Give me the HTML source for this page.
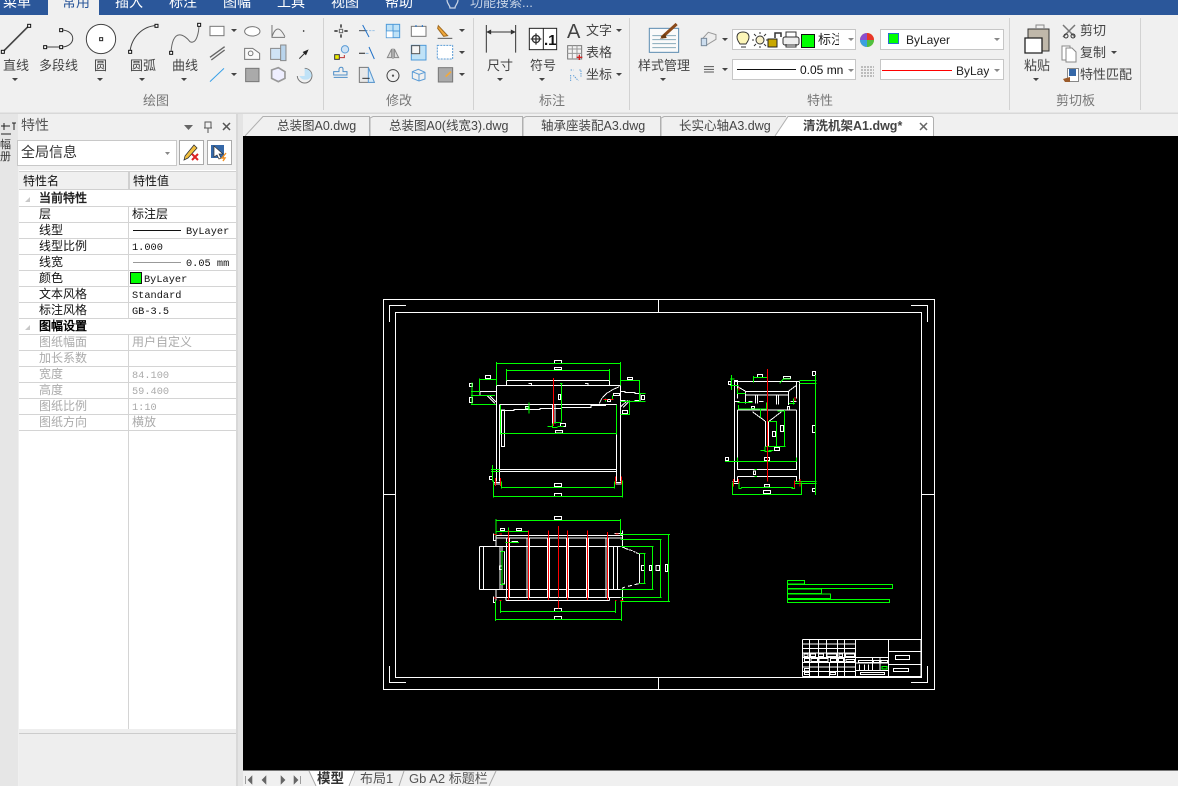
<!DOCTYPE html>
<html><head><meta charset="utf-8">
<style>
html,body{margin:0;padding:0;background:#f0f0f0;width:1178px;height:786px;overflow:hidden}
svg{display:block;position:absolute;left:0;top:0}
text{font-family:"Liberation Sans","Noto Sans CJK SC",sans-serif;fill:#444;font-size:13px}
.t{font-size:12px;fill:#111;font-family:"Liberation Mono","WenQuanYi Zen Hei",monospace}
.g{font-size:12px;fill:#aaa;font-family:"Liberation Mono","WenQuanYi Zen Hei",monospace}
.s{font-size:10.300px;fill:#111;font-family:"Liberation Mono","WenQuanYi Zen Hei",monospace}
.m{fill:#fff;font-size:14px}
.c{fill:#777;font-size:13px}
.W path,.W rect{fill:none;stroke:#fff;stroke-width:3}
.G path{fill:none;stroke:#0f0;stroke-width:3}
.R path{fill:none;stroke:#f00;stroke-width:3}
.W,.G,.R,.F{shape-rendering:crispEdges}
</style></head><body>
<svg width="1178" height="786" viewBox="0 0 1178 786" xmlns="http://www.w3.org/2000/svg">
<rect width="1178" height="786" fill="#f0f0f0"/>
<!-- menu bar -->
<rect width="1178" height="15" fill="#2b579a"/>
<rect x="48" width="51" height="16" fill="#f0f0f0"/>
<g class="m">
<text class="m" x="3" y="7">菜单</text>
<text x="62" y="7" style="fill:#2b579a;font-size:14px">常用</text>
<text class="m" x="115" y="7">插入</text>
<text class="m" x="169" y="7">标注</text>
<text class="m" x="223" y="7">图幅</text>
<text class="m" x="277" y="7">工具</text>
<text class="m" x="331" y="7">视图</text>
<text class="m" x="385" y="7">帮助</text>
<text x="470" y="7" style="fill:#c8d4e6;font-size:13px">功能搜索...</text>
</g>
<path d="M447 0c0 4 3 5 3 8h5c0-3 3-4 3-8" fill="none" stroke="#c8d4e6" stroke-width="1.2"/>
<!-- ribbon separators -->
<path d="M323.500 18V110M473.500 18V110M629.500 18V110M1009.500 18V110M1140.500 18V110" stroke="#d2d2d2"/>
<path d="M0 113.500H1178" stroke="#d8d8d8" stroke-width="2"/>
<!-- draw icons, zoom coordinates -->
<g transform="scale(.3333)" fill="none" stroke="#444" stroke-width="3">
<path d="M9 155L87 77" stroke-width="5"/>
<rect x="4" y="151" width="9" height="9" fill="#fff" stroke="#111"/><rect x="83" y="73" width="9" height="9" fill="#fff" stroke="#111"/>
<path d="M135 141H183M183 90C230 90 230 141 183 141"/>
<rect x="131" y="137" width="9" height="9" fill="#fff" stroke="#111"/><rect x="179" y="137" width="9" height="9" fill="#fff" stroke="#111"/><rect x="179" y="86" width="9" height="9" fill="#fff" stroke="#111"/>
<circle cx="303" cy="117" r="44" stroke="#444" fill="#fff"/><rect x="299" y="113" width="9" height="9" stroke="#222"/>
<path d="M390 155C395 110 430 78 469 77"/>
<rect x="386" y="151" width="9" height="9" fill="#fff" stroke="#111"/><rect x="465" y="73" width="9" height="9" fill="#fff" stroke="#111"/>
<path d="M513 158C518 80 555 105 570 125C590 135 597 95 597 74" stroke="#666"/>
<rect x="509" y="154" width="9" height="9" fill="#fff" stroke="#111"/><rect x="593" y="70" width="9" height="9" fill="#fff" stroke="#111"/>
<rect x="630" y="79" width="42" height="28" fill="#fff" stroke="#777"/>
<path d="M630 172L674 140M634 180L674 150" stroke="#666" stroke-width="4"/>
<path d="M630 245L672 205" stroke="#38a0e8"/>
<ellipse cx="757" cy="94" rx="23" ry="14" fill="#fff" stroke="#777"/>
<path d="M734 145H758L779 160V178H734Z" stroke="#777" fill="#fafafa"/><circle cx="752" cy="160" r="7" stroke="#777"/>
<rect x="737" y="205" width="40" height="40" fill="#aaa" stroke="#777"/>
<path d="M816 75V112H855M816 110C830 70 845 90 855 110" stroke="#777"/>
<path d="M812 145H855V178H812Z" fill="#cfe3f5" stroke="#888"/><path d="M842 135H858V182H842Z" fill="#b9d4ec" stroke="#888"/>
<path d="M815 210L835 203L855 215L855 235L835 245L815 235Z" fill="#eef" stroke="#999" stroke-width="5"/>
<circle cx="911" cy="93" r="2.500" fill="#333" stroke="none"/>
<path d="M898 176L922 152" stroke="#333"/><path d="M926 148L908 156L918 166Z" fill="#222" stroke="none"/>
<path d="M914 205A22 22 0 1 1 892 228" stroke="#777"/><path d="M914 228V206A22 22 0 0 1 935 228Z" fill="#bfe2f7" stroke="none"/><path d="M898 228H935A21 21 0 0 1 898 228Z" fill="#bfe2f7" stroke="none"/>
</g>
<g fill="#444">
<path d="M231 29h6l-3 3zM231 73h6l-3 3z"/>
<path d="M12 78h6l-3 3zM97 78h6l-3 3zM139 78h6l-3 3zM181 78h6l-3 3zM497 78h6l-3 3zM539 78h6l-3 3zM660 78h6l-3 3zM1033 78h6l-3 3z"/>
<path d="M459 29h6l-3 3zM459 51h6l-3 3zM459 73h6l-3 3zM616 29h6l-3 3zM616 73h6l-3 3zM722 38h6l-3 3zM722 68h6l-3 3zM1111 51h6l-3 3z"/>
</g>
<g font-size="13">
<text x="3" y="70">直线</text><text x="39" y="70">多段线</text><text x="94" y="70">圆</text><text x="130" y="70">圆弧</text><text x="172" y="70">曲线</text>
<text x="143" y="105" class="c">绘图</text><text x="386" y="105" class="c">修改</text><text x="539" y="105" class="c">标注</text><text x="807" y="105" class="c">特性</text><text x="1056" y="105" class="c">剪切板</text>
<text x="487" y="70">尺寸</text><text x="530" y="70">符号</text><text x="586" y="35">文字</text><text x="586" y="57">表格</text><text x="586" y="79">坐标</text>
<text x="638" y="70">样式管理</text>
<text x="1024" y="70">粘贴</text><text x="1080" y="35">剪切</text><text x="1080" y="57">复制</text><text x="1080" y="79">特性匹配</text>
</g>
<text x="567" y="38" style="font-size:20px;fill:#444">A</text>
<!-- modify icons -->
<g transform="translate(325 15) scale(.3333)" fill="none" stroke="#555" stroke-width="3">
<rect x="43" y="43" width="10" height="10" stroke="#666"/><path d="M48 28V38M48 58V68M28 48H38M58 48H68" stroke="#444" stroke-width="5"/>
<path d="M102 47H150" stroke="#9cc3e6" stroke-dasharray="7 3"/><path d="M102 47H125" stroke="#555"/><path d="M113 30L132 66" stroke="#2272c8"/>
<rect x="184" y="28" width="40" height="40" fill="#bfe2f7" stroke="#4f9ad8"/><path d="M204 28V68M184 48H224" stroke="#4f9ad8"/><rect x="185" y="49" width="18" height="18" fill="#fff" stroke="none"/>
<rect x="259" y="34" width="44" height="30" fill="#fff" stroke="#777"/><path d="M273 30V36M292 30V36" stroke="#2272c8"/>
<path d="M340 32L368 62L356 64L338 40Z" fill="#f2a93b" stroke="#a06a20"/><path d="M338 70H382" stroke="#555"/>
<circle cx="60" cy="103" r="11" fill="#cfe3f5" stroke="#5a9bd5"/><rect x="29" y="119" width="14" height="14" fill="#ee0" stroke="#333"/><path d="M43 128H58V120" stroke="#b33"/>
<path d="M102 115H120" stroke="#555" stroke-width="4"/><path d="M122 115H130" stroke="#5a9bd5" stroke-dasharray="3 2"/><path d="M132 96L148 132" stroke="#2272c8"/>
<path d="M204 100V132M200 102L187 128H200ZM208 102L221 128H208Z" fill="#ddd" stroke="#888"/>
<rect x="259" y="91" width="44" height="44" fill="#bfe2f7" stroke="#4f9ad8"/><rect x="260" y="92" width="24" height="24" fill="#f4f4f4" stroke="#555"/>
<rect x="337" y="91" width="46" height="41" fill="#fff" stroke="#5a9bd5" stroke-dasharray="6 3"/>
<path d="M26 170H42V162C44 155 54 155 54 162V170H66V180H26ZM26 187H68" stroke="#4f8fc8"/>
<path d="M103 157H130L148 202H103Z" fill="#e8e8e8" stroke="#777"/><path d="M130 157L148 202H130Z" fill="#d5e9f8" stroke="#5a9bd5"/><path d="M112 190H134" stroke="#333"/>
<circle cx="204" cy="182" r="18" stroke="#444"/><circle cx="204" cy="182" r="2" fill="#444"/>
<path d="M262 170L280 163L300 172V192L282 198L262 190Z M282 178V198M262 170L282 178L300 172" stroke="#5a9bd5"/>
<rect x="340" y="158" width="43" height="43" fill="#aaa" stroke="#777"/><path d="M362 185L378 170" stroke="#f2a93b" stroke-width="5"/>
</g>
<!-- dim icons -->
<g transform="translate(400 0) scale(.3333)" fill="none" stroke="#333" stroke-width="3">
<path d="M259 75V158M347 75V158" stroke="#333"/><path d="M262 96H344" stroke-width="3"/><path d="M262 96L272 91V101ZM344 96L334 91V101Z" fill="#333"/>
<rect x="388" y="85" width="82" height="64" fill="#fff" stroke="#222"/><path d="M430 85V149" stroke="#222"/><circle cx="408" cy="117" r="11" stroke-width="4"/><path d="M392 117H424M408 100V134" stroke-width="4"/>
<rect x="503" y="137" width="42" height="40" fill="#f4f4f4" stroke="#777"/><path d="M503 147H545M517 137V177M531 137V177M503 160H545" stroke="#999"/><path d="M530 172H547M538 164V180" stroke="#c22" stroke-width="4"/>
<path d="M512 210H520M538 210H544M512 225V245M543 212V232M520 226L535 242" stroke="#5a9bd5" stroke-dasharray="4 3"/>
<rect x="748" y="85" width="88" height="72" fill="#fafafa" stroke="#5a8ab0"/><path d="M757 107H828M757 119H828M757 131H828M757 143H828" stroke="#8ab"/>
<path d="M785 113L830 72" stroke="#8a4a1a" stroke-width="9"/><path d="M780 116L795 100L800 114Z" fill="#6a3a10" stroke="none"/>
<path d="M904 120L925 97L948 104L948 118L920 135Z" fill="#eee" stroke="#999"/><rect x="904" y="115" width="16" height="22" fill="#cde" stroke="#789"/>
<path d="M912 200H942M912 208H942M912 216H942" stroke="#555"/>
</g>
<text x="544" y="45" style="font-size:15px;font-weight:bold;fill:#111">.1</text>
<!-- props combos -->
<rect x="732.500" y="29.500" width="123" height="20" fill="#fff" stroke="#c6c6c6"/>
<rect x="732.500" y="59.500" width="123" height="20" fill="#fff" stroke="#c6c6c6"/>
<rect x="880.500" y="29.500" width="123" height="20" fill="#fff" stroke="#c6c6c6"/>
<rect x="880.500" y="59.500" width="123" height="20" fill="#fff" stroke="#c6c6c6"/>
<path d="M848 38h6l-3 3zM848 69h6l-3 3zM994 38h6l-3 3zM994 69h6l-3 3z" fill="#888"/>
<g fill="none" stroke="#333">
<path d="M741 47h5M740 44C734 36 738 32 743 32C748 32 752 36 746 44Z" fill="#fdf6b8"/>
<circle cx="760" cy="40" r="4" fill="#f8f0c8"/><path d="M760 32v2M760 46v2M752 40h2M766 40h2M754 34l2 2M764 44l2 2M766 34l-2 2M756 44l-2 2"/>
<rect x="768" y="39" width="9" height="8" fill="#c9a800" stroke="#222"/><path d="M775 38V33H781V37" stroke-width="1.500"/>
<rect x="783" y="37" width="16" height="8" rx="2" fill="#eee"/><path d="M786 37V32H796V37M786 44V47H796V44"/>
<rect x="801.500" y="34.500" width="13" height="13" fill="#0f0" stroke="#111"/>
<path d="M737 69.500H796" stroke="#111" stroke-width="1"/>
<rect x="888.500" y="33.500" width="10" height="10" fill="#0f0" stroke="#2a6fd0"/>
<path d="M882 70.500H952" stroke="#f00"/>
<path d="M861 67h13M861 70h13M861 73h13M861 76h13" stroke="#888" stroke-dasharray="2 1"/>
</g>
<clipPath id="cp1"><rect x="732" y="30" width="107" height="20"/></clipPath>
<text x="818" y="44" clip-path="url(#cp1)" style="fill:#222">标注</text>
<text x="800" y="74" style="fill:#111;font-size:12px">0.05 mn</text>
<text x="906" y="44" style="fill:#222;font-size:12px">ByLayer</text>
<clipPath id="cp2"><rect x="950" y="60" width="39" height="20"/></clipPath>
<text x="956" y="75" clip-path="url(#cp2)" style="fill:#222;font-size:12px">ByLayer</text>
<circle cx="867" cy="40" r="7" fill="#f8c020"/><path d="M867 40V33A7 7 0 0 1 874 40Z" fill="#e8352a"/><path d="M867 40H860A7 7 0 0 1 867 33Z" fill="#8a4fd0"/><path d="M867 40V47A7 7 0 0 1 860 40Z" fill="#3aa0e0"/><path d="M867 40H874A7 7 0 0 1 867 47Z" fill="#50c040"/>
<!-- clipboard icons -->
<g fill="none" stroke="#333">
<path d="M1028 29H1049V51H1042V39H1028Z" fill="#c0b8aa"/><path d="M1036 29V25H1044V29" stroke="#888"/>
<path d="M1025 38H1038L1042 38V53H1025Z" fill="#fff" stroke="#222" stroke-width="1.300"/>
<path d="M1063 25L1075 37M1075 25L1063 37" stroke="#777" stroke-width="1.500"/><circle cx="1066" cy="36" r="2"/><circle cx="1073" cy="36" r="2"/>
<path d="M1062 46H1070V60H1062Z" stroke="#888" fill="#fff"/><path d="M1066 48H1072L1076 52V62H1066Z" stroke="#888" fill="#fff"/>
<rect x="1067.500" y="68.500" width="11" height="13" fill="#fff" stroke="#888"/><rect x="1069" y="69" width="7" height="7" fill="#3568a8" stroke="none"/><path d="M1063 79L1070 77V82H1065Z" fill="#9b5b2b" stroke="none"/>
</g>
<!-- left -->
<rect x="0" y="114" width="18" height="672" fill="#e6e6e6"/>
<path d="M1 126H10M4 123L4 130M12 123H16M14 123V130M1 134H11" stroke="#222" fill="none"/>
<text x="0" y="148" style="font-size:11px;fill:#333">幅</text>
<text x="0" y="160" style="font-size:11px;fill:#333">册</text>
<rect x="18" y="114" width="219" height="672" fill="#f0f0f0"/>
<text x="21" y="130" style="font-size:14px;fill:#555">特性</text>
<path d="M184 125h9l-4.500 5z" fill="#666"/><path d="M205 122h6v6h-6zM208 128v5M204 128h8" fill="none" stroke="#555"/><path d="M223 123l7 7M230 123l-7 7" stroke="#555" stroke-width="1.500"/>
<rect x="17.500" y="140.500" width="159" height="25" fill="#fff" stroke="#c8c8c8"/>
<text x="21" y="157" style="font-size:14px;fill:#333">全局信息</text>
<path d="M165 152h5l-2.500 3z" fill="#888"/>
<rect x="179.500" y="140.500" width="24" height="24" fill="#fff" stroke="#aaa"/>
<path d="M185 156L194 145L197 148L188 158L184 160Z" fill="#f2c040" stroke="#333" stroke-width=".8"/><path d="M192 154l6 6M198 154l-6 6" stroke="#d22" stroke-width="2"/>
<rect x="207.500" y="140.500" width="24" height="24" fill="#fff" stroke="#aaa"/>
<rect x="211" y="145" width="13" height="13" fill="#3568a8"/><path d="M214 146V157L217 155L219 159L221 158L219 154H223Z" fill="#fff" stroke="#333" stroke-width=".7"/><path d="M226 153L222 158H225L223 161" stroke="#f29020" fill="none" stroke-width="1.400"/>
<!-- table -->
<rect x="19" y="170" width="217" height="559" fill="#fff"/>
<rect x="19" y="171" width="217" height="19" fill="#f0f0f0"/>
<path d="M19 171.500H236M19 189.500H236M128.500 171V190M129.500 171V190" stroke="#d0d0d0"/>
<path d="M128.500 206V318M128.500 334V729" stroke="#d4d4d4" fill="none"/>
<path d="M19 206.500H236M19 222.500H236M19 238.500H236M19 254.500H236M19 270.500H236M19 286.500H236M19 302.500H236M19 318.500H236M19 334.500H236M19 350.500H236M19 366.500H236M19 382.500H236M19 398.500H236M19 414.500H236M19 430.500H236" stroke="#d4d4d4"/>
<rect x="19" y="729" width="217" height="57" fill="#eee"/><path d="M19 733.500H236" stroke="#ccc"/>
<rect x="236" y="114" width="7" height="672" fill="#e4e4e4"/><path d="M237 114V786" stroke="#ccc"/>
<path d="M25 202l5-5v5zM25 330l5-5v5z" fill="#c8c8c8"/>
<g>
<text class="t" x="23" y="185">特性名</text><text class="t" x="133" y="185">特性值</text>
<text class="t" x="39" y="202" style="font-weight:bold;fill:#222">当前特性</text>
<text class="t" x="39" y="218">层</text><text class="t" x="132" y="218">标注层</text>
<text class="t" x="39" y="234">线型</text><path d="M133 230.500H181" stroke="#111"/><text class="s" x="186" y="234">ByLayer</text>
<text class="t" x="39" y="250">线型比例</text><text class="s" x="132" y="250">1.000</text>
<text class="t" x="39" y="266">线宽</text><path d="M133 262.500H181" stroke="#999"/><text class="s" x="186" y="266">0.05 mm</text>
<text class="t" x="39" y="282">颜色</text><rect x="130.500" y="272.500" width="11" height="11" fill="#0f0" stroke="#111"/><text class="s" x="144" y="282">ByLayer</text>
<text class="t" x="39" y="298">文本风格</text><text class="s" x="132" y="298">Standard</text>
<text class="t" x="39" y="314">标注风格</text><text class="s" x="132" y="314">GB-3.5</text>
<text class="t" x="39" y="330" style="font-weight:bold;fill:#000">图幅设置</text>
<text class="g" x="39" y="346">图纸幅面</text><text class="g" x="132" y="346">用户自定义</text>
<text class="g" x="39" y="362">加长系数</text>
<text class="g" x="39" y="378">宽度</text><text class="s" x="132" y="378" style="fill:#aaa">84.100</text>
<text class="g" x="39" y="394">高度</text><text class="s" x="132" y="394" style="fill:#aaa">59.400</text>
<text class="g" x="39" y="410">图纸比例</text><text class="s" x="132" y="410" style="fill:#aaa">1:10</text>
<text class="g" x="39" y="426">图纸方向</text><text class="g" x="132" y="426">横放</text>
</g>
<!-- file tabs -->
<rect x="243" y="114" width="935" height="22" fill="#f0f0f0"/>
<g fill="#f0f0f0" stroke="#b0b0b0">
<path d="M245 136L263 116.500H369.500V136"/>
<path d="M370 136V118L373 116.500H522.500V136"/>
<path d="M523 136V118L526 116.500H660.500V136"/>
<path d="M661 136V118L664 116.500H786"/>
<path d="M775 136L788 116.500H932L933.500 118V136" fill="#fff"/>
</g>
<g style="fill:#444">
<text x="277" y="130" style="font-size:12.500px">总装图A0.dwg</text>
<text x="389" y="130" style="font-size:12.500px">总装图A0(线宽3).dwg</text>
<text x="541" y="130" style="font-size:12.500px">轴承座装配A3.dwg</text>
<text x="679" y="130" style="font-size:12.500px">长实心轴A3.dwg</text>
<text x="803" y="130" style="font-size:12.500px;font-weight:bold">清洗机架A1.dwg*</text>
</g>
<path d="M920 123l7 7M927 123l-7 7" stroke="#666" stroke-width="1.500"/>
<!-- canvas -->
<rect x="243" y="136" width="935" height="634" fill="#000"/>
<g class="F" fill="none" stroke="#fff" stroke-width="1">
<rect x="383.500" y="299.500" width="551" height="390"/>
<rect x="395.500" y="312.500" width="526" height="365"/>
<path d="M658.500 299V312M658.500 677V689M383 494.500H395M921 494.500H934"/>
<path d="M389.500 322V305.500H406M927.500 322V305.500H911M389.500 666V682.500H406M927.500 666V682.500H911"/>
</g>
<!-- view 1 -->
<g transform="translate(460 350) scale(.3333)">
<g class="W">
<path d="M110 106H481M110 106V395M119 163V395M470 163V395M481 106V395M119 163H470M119 358H470M119 365H470"/>
<path d="M140 92H448M140 92V106M448 92V106M205 101H215V106M375 101H384V106"/>
<rect x="125" y="180" width="8" height="110"/>
<path d="M125 181H162V178H240V175H305V172H393V167H437V163"/>
<path d="M278 163V220M285 163V220"/>
<path d="M60 124H110M60 124V135M36 124H60M82 138L105 160M90 138L108 156"/>
<path d="M481 124H495V127H525V130H540V152H525V155H495V152H481"/>
<path d="M418 160L425 146L440 130L460 118L478 110M482 170L505 150M490 172L505 156"/>
<path d="M100 397H122M467 397H487M100 402H122M467 402H487"/>
<rect x="283" y="31" width="21" height="9"/><rect x="283" y="52" width="21" height="7"/><rect x="76" y="76" width="15" height="10"/><rect x="28" y="100" width="9" height="9"/><rect x="28" y="142" width="9" height="15"/><rect x="295" y="133" width="7" height="16"/><rect x="196" y="169" width="9" height="8"/><rect x="301" y="220" width="15" height="9"/><rect x="287" y="241" width="20" height="8"/><rect x="88" y="379" width="9" height="9"/><rect x="283" y="401" width="21" height="8"/><rect x="283" y="431" width="21" height="8"/><rect x="503" y="82" width="14" height="7"/><rect x="544" y="136" width="9" height="12"/><rect x="488" y="181" width="14" height="9"/><rect x="461" y="130" width="18" height="6"/><rect x="442" y="149" width="10" height="6"/>
</g>
<g class="G">
<path d="M110 36V106M481 36V106M110 41H481M139 57V92M449 57V92M139 61H449"/>
<path d="M58 85V124M58 88H110M36 97V165M33 125H60M33 136H105M33 163H108"/>
<path d="M481 91H539V130M539 130V155M481 154H557M539 130H557M481 193H509V150"/>
<path d="M122 165V253M470 165V253M122 250H470"/>
<path d="M304 100V215M300 101H308M282 217H304M262 229H278M292 229H310M277 220V232H293"/>
<path d="M207 157V190M197 174H210"/>
<path d="M97 345V395M93 358H119M93 365H119"/>
<path d="M125 394V416M464 394V416M125 412H464M101 392V442M488 392V442M101 439H488"/>
<path d="M437 145V155M457 136V150M482 155H495"/>
</g>
<g class="R"><path d="M280 84V228M106 384V408M122 384V408M466 380V404M484 380V404M430 149H442M452 149H460"/></g>
</g>
<!-- view 2 -->
<g transform="translate(715 365) scale(.3333)">
<g class="W">
<path d="M58 50H254M58 50V350M67 50V100M245 50V100M254 50V350M67 135H245M67 135V313H245V135M67 335H245V350M67 335V350"/>
<path d="M92 79H220M92 90H220M92 79V115M220 79V120M122 92V115M128 92V115M184 92V118M190 92V118"/>
<path d="M68 65L92 79M220 79L243 62M112 140L150 168M200 140L163 168M151 168V245M160 168V245"/>
<path d="M60 110H73M100 110H112M132 110H146M226 110H244M52 350H70M240 350H258M52 356H70M240 356H258"/>
<rect x="127" y="28" width="16" height="9"/><rect x="40" y="49" width="8" height="10"/><rect x="59" y="46" width="8" height="16"/><rect x="292" y="19" width="10" height="12"/><rect x="292" y="181" width="9" height="22"/><rect x="292" y="370" width="9" height="10"/><rect x="196" y="181" width="9" height="18"/><rect x="172" y="199" width="9" height="16"/><rect x="178" y="247" width="16" height="9"/><rect x="148" y="278" width="15" height="9"/><rect x="31" y="277" width="10" height="10"/><rect x="115" y="318" width="7" height="11"/><rect x="148" y="358" width="15" height="8"/><rect x="145" y="376" width="22" height="10"/><rect x="109" y="124" width="10" height="6"/><rect x="217" y="124" width="7" height="11"/><rect x="205" y="35" width="22" height="5"/>
</g>
<g class="G">
<path d="M115 33V52M115 37H157M194 55L205 42H227M49 30V75M45 42H58M45 62H70M68 70V85H92M68 112H112M70 120V132H155M155 112V132M136 130V158"/>
<path d="M254 46H305M254 55H305M301 30V390"/>
<path d="M160 169H185V245M208 135V245M187 138H208M136 257H150M160 257H175M150 245V260H170M153 244H212"/>
<path d="M30 289H245M67 277V289M245 277V289"/>
<path d="M118 313H126M118 335H126"/>
<path d="M240 349H305M240 356H305M52 352V390M259 352V390M52 388H259M72 349V370H80M238 349V370H230M78 367H234"/>
<path d="M235 100V118M222 115H240"/>
</g>
<g class="R"><path d="M157 12V350M55 342V364M70 342V356M239 346V368M255 342V364M72 68V76M240 96V108"/></g>
</g>
<!-- view 3 -->
<g transform="translate(470 510) scale(.3333)">
<g class="W">
<path d="M78 76H458M78 84H458M78 76V110M458 62V110M28 109H452M28 238H452M28 109V238M40 109V238M90 109V238M96 109V238"/>
<path d="M78 238V272M458 238V272M78 262H458M108 272H418M108 264V272M418 264V272M70 70V92H78M70 260V278H78M434 70H458"/>
<path d="M110 84V262M118 84V262M171 84V262M178 84V262M232 84V262M238 84V262M289 84V262M296 84V262M349 84V262M355 84V262M408 84V262M416 84V262M430 109V238M442 109V238"/>
<path d="M456 111L465 114M465 115L474 118M476 119L488 122M490 124L496 127M498 128L506 131M508 131V220M506 221L494 224M486 226L474 229M465 231L456 235"/>
<path d="M96 124H104V222H96"/>
<rect x="253" y="19" width="21" height="10"/><rect x="91" y="55" width="13" height="7"/><rect x="139" y="55" width="16" height="7"/><rect x="514" y="166" width="9" height="15"/><rect x="538" y="166" width="7" height="15"/><rect x="558" y="166" width="11" height="15"/><rect x="586" y="163" width="7" height="22"/><rect x="253" y="295" width="21" height="9"/><rect x="253" y="319" width="21" height="9"/><rect x="88" y="168" width="8" height="10"/><rect x="126" y="94" width="17" height="4"/>
</g>
<g class="G">
<path d="M78 27V76M452 27V76M78 31H452M78 64H175M115 52V110M106 98H147"/>
<path d="M452 73H600M452 88H575M452 109H551M452 238H551M452 262H575M452 274H600M595 73V274M571 88V262M547 109V238M507 131H527M507 220H527M523 130V220"/>
<path d="M96 124V224M92 124H104M92 224H104"/>
<path d="M91 272V309M437 272V309M91 305H437M76 272V333M454 272V333M76 328H454"/>
</g>
<g class="R"><path d="M265 48V262M265 272V296M115 62V270M175 62V270M235 62V270M292 62V270M352 62V270M412 66V270M72 74H80M88 72H96M437 72H445M72 264H80M88 272H94M435 272H440M452 272H460"/></g>
</g>
<!-- notes -->
<g transform="translate(780 570) scale(.3333)">
<g class="G">
<path d="M22 31H74V42H22ZM22 43H338V56H22ZM22 57H125V71H22ZM22 72H152V86H22ZM22 88H329V98H22Z"/>
</g>
<g class="W">
<path d="M67 208V319M67 208H423M67 222H226M67 235H226M67 249H226M67 263H226M67 277H226M67 291H226M67 305H226M67 319H423M89 208V319M115 208V319M139 208V263M172 208V319M193 208V319M148 277V319M226 208V319M226 263H325M226 279H325M226 301H325M325 208V319M325 244H423M325 283H423M423 208V319M277 263V301M300 263V301M238 283V301M253 283V301M265 283V301"/>
<rect x="72" y="252" width="12" height="8"/><rect x="92" y="252" width="14" height="8"/><rect x="116" y="252" width="14" height="8"/><rect x="141" y="252" width="28" height="8"/><rect x="177" y="252" width="11" height="8"/><rect x="196" y="252" width="27" height="8"/>
<rect x="73" y="266" width="15" height="8"/><rect x="93" y="266" width="20" height="8"/><rect x="117" y="266" width="27" height="8"/><rect x="151" y="266" width="19" height="8"/><rect x="175" y="266" width="16" height="8"/><rect x="198" y="268" width="25" height="7"/>
<rect x="73" y="295" width="16" height="8"/><rect x="73" y="307" width="16" height="7"/><rect x="150" y="307" width="17" height="7"/>
<rect x="235" y="271" width="42" height="6"/><rect x="280" y="271" width="18" height="6"/><rect x="303" y="271" width="20" height="6"/><rect x="241" y="307" width="73" height="7"/>
<rect x="346" y="256" width="43" height="13"/><rect x="340" y="295" width="46" height="9"/>
</g>
<g class="G"><path d="M306 289H321V297H306Z"/></g>
</g>
<!-- bottom tabs -->
<rect x="243" y="770" width="935" height="16" fill="#f0f0f0"/>
<path d="M243 770.500H1178" stroke="#777"/>
<path d="M309 771L316 786H345L350 786L356 771Z" fill="#fff"/>
<path d="M309 771L316 786M496 771L489 786" fill="none" stroke="#aaa"/>
<path d="M349 786L355 771M399 786L404 771" fill="none" stroke="#aaa"/>
<path d="M245.500 776V784M252 776L248 780L252 784ZM266 776L262 780L266 784ZM281 776L285 780L281 784ZM294 776L298 780L294 784ZM300.500 776V784" fill="#666" stroke="#666" stroke-width=".6"/>
<text x="317" y="783" style="font-size:13.500px;font-weight:bold;fill:#333">模型</text>
<text x="360" y="783" style="font-size:13px;fill:#555">布局1</text>
<text x="409" y="783" style="font-size:13px;fill:#555">Gb A2 标题栏</text>
</svg>
</body></html>
